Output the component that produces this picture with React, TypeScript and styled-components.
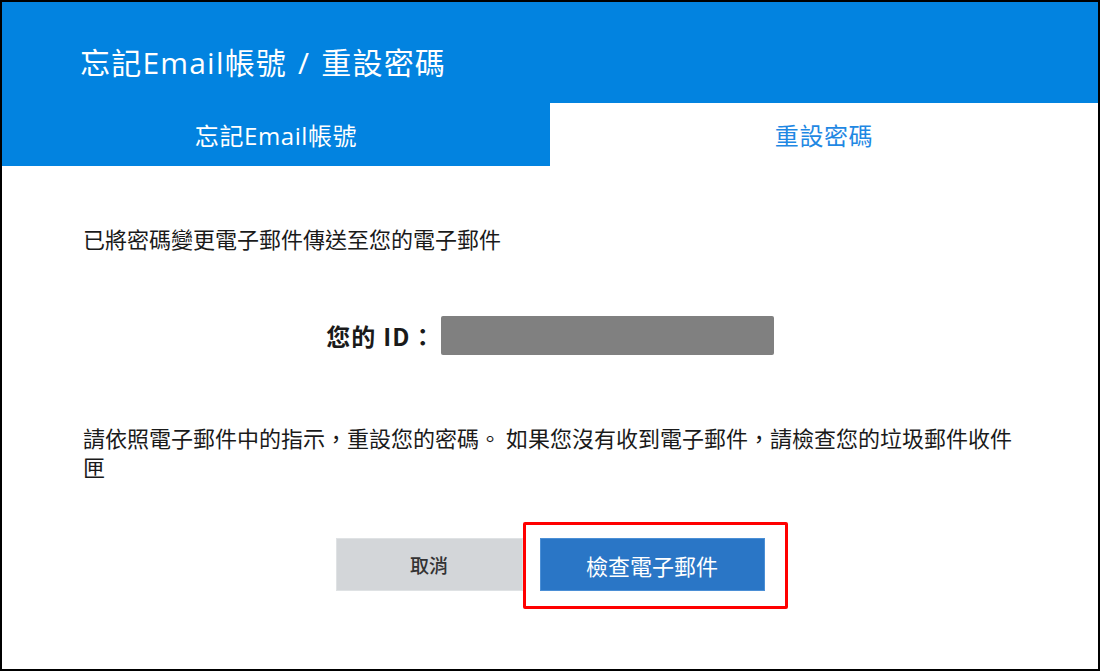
import styled, { createGlobalStyle } from "styled-components";

const BLUE = "#0283e0";

const GlobalStyle = createGlobalStyle`
  html, body {
    margin: 0;
    padding: 0;
    background: #fff;
  }
  body {
    font-family: "Noto Sans", "Noto Sans CJK TC", sans-serif;
    color: #1a1a1a;
  }
`;

const Frame = styled.div`
  width: 1100px;
  height: 671px;
  box-sizing: border-box;
  border: 2px solid #000;
  background: #fff;
  display: flex;
  flex-direction: column;
`;

const Header = styled.header`
  height: 101px;
  box-sizing: border-box;
  padding: 16px 0 0 78px;
  background: ${BLUE};
  display: flex;
  align-items: center;
  color: #fff;
  font-size: 30px;
  letter-spacing: 1.2px;
  word-spacing: 2px;
  font-family: "Open Sans", "Noto Sans CJK TC", sans-serif;
`;

const Tabs = styled.nav`
  display: grid;
  grid-template-columns: 548px 1fr;
  height: 63px;
`;

const Tab = styled.div<{ $active?: boolean }>`
  display: flex;
  align-items: center;
  justify-content: center;
  font-size: 24px;
  letter-spacing: 0.6px;
  font-family: "Open Sans", "Noto Sans CJK TC", sans-serif;
  background: ${(p) => (p.$active ? "#fff" : BLUE)};
  color: ${(p) => (p.$active ? "#1f88e3" : "#fff")};
`;

const Body = styled.main`
  padding: 57px 81px 0;
  font-family: "Noto Sans CJK TC", sans-serif;
`;

const Message = styled.p`
  margin: 0;
  font-size: 22px;
  line-height: 30px;
`;

const IdRow = styled.div`
  margin-top: 63px;
  display: flex;
  justify-content: center;
  align-items: center;
  gap: 5px;
`;

const IdLabel = styled.span`
  font-size: 24px;
  font-weight: 700;
  letter-spacing: 1.2px;
`;

const IdMask = styled.span`
  width: 333px;
  height: 39px;
  border-radius: 2px;
  background: #808080;
`;

const Instructions = styled.p`
  margin: 68px 0 0;
  font-size: 22px;
  line-height: 29px;
`;

const Actions = styled.div`
  margin-top: 57px;
  display: flex;
  justify-content: center;
  gap: 17px;
`;

const Button = styled.button<{ $primary?: boolean }>`
  width: ${(p) => (p.$primary ? "225px" : "187px")};
  height: 53px;
  border: 1px solid ${(p) => (p.$primary ? "#4b8fd6" : "#dfe2e4")};
  border-radius: 0;
  padding: 0;
  background: ${(p) => (p.$primary ? "#2a76c6" : "#d3d6d9")};
  color: ${(p) => (p.$primary ? "#fff" : "#333")};
  font-family: "Noto Sans CJK TC", sans-serif;
  font-size: ${(p) => (p.$primary ? "22px" : "19px")};
  font-weight: ${(p) => (p.$primary ? 400 : 500)};
  cursor: pointer;
`;

const Highlight = styled.span`
  position: relative;
  display: inline-flex;
`;

const Callout = styled.span`
  position: absolute;
  top: -16px;
  left: -17px;
  right: -23px;
  bottom: -18px;
  border: 3px solid #f00;
  border-radius: 2px;
  pointer-events: none;
`;

export default function App() {
  return (
    <>
      <GlobalStyle />
      <Frame>
        <Header>忘記Email帳號 / 重設密碼</Header>
        <Tabs>
          <Tab>忘記Email帳號</Tab>
          <Tab $active>重設密碼</Tab>
        </Tabs>
        <Body>
          <Message>已將密碼變更電子郵件傳送至您的電子郵件</Message>
          <IdRow>
            <IdLabel>您的 ID：</IdLabel>
            <IdMask />
          </IdRow>
          <Instructions>
            請依照電子郵件中的指示，重設您的密碼。 如果您沒有收到電子郵件，請檢查您的垃圾郵件收件匣
          </Instructions>
          <Actions>
            <Button type="button">取消</Button>
            <Highlight>
              <Button type="button" $primary>
                檢查電子郵件
              </Button>
              <Callout />
            </Highlight>
          </Actions>
        </Body>
      </Frame>
    </>
  );
}
